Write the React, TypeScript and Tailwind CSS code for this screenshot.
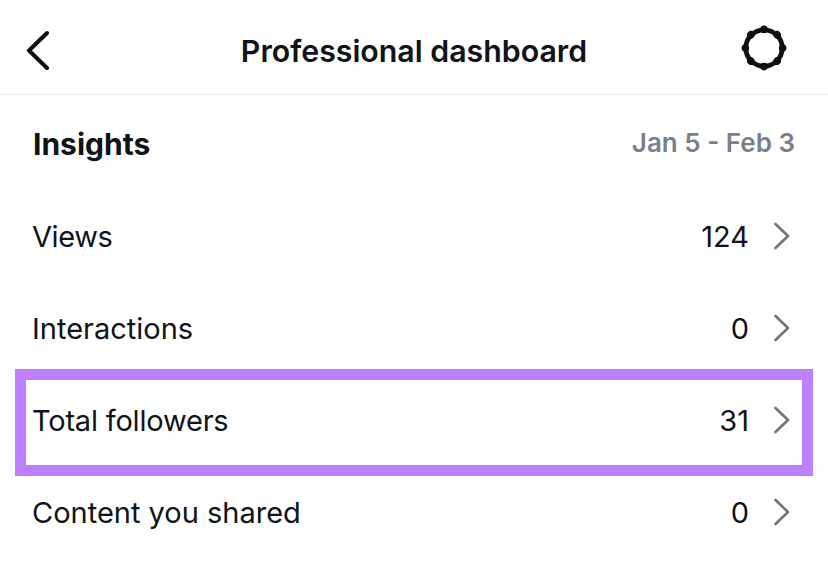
const rows = [
  { label: "Views", value: "124", labelClass: "tracking-[-0.4px]" },
  { label: "Interactions", value: "0", labelClass: "" },
  { label: "Total followers", value: "31", labelClass: "tracking-[-0.2px]", highlight: true },
  { label: "Content you shared", value: "0", labelClass: "" },
]

function Chevron() {
  return (
    <svg width="18" height="28" viewBox="0 0 18 28" fill="none" className="shrink-0">
      <path d="M2.5 2 L15 14 L2.5 26" stroke="#70747a" strokeWidth="2.6" strokeLinecap="round" strokeLinejoin="round" />
    </svg>
  )
}

function Gear() {
  // eight small bumps round a thick ring
  const bumps = [0, 45, 90, 135, 180, 225, 270, 315]
  return (
    <svg width="46" height="46" viewBox="0 0 46 46" fill="none">
      <circle cx="23" cy="23" r="18.2" stroke="#0c0f14" strokeWidth="4.8" />
      {bumps.map((a) => (
        <circle key={a} cx="23" cy="4.4" r="3.8" fill="#0c0f14" transform={`rotate(${a} 23 23)`} />
      ))}
    </svg>
  )
}

export default function App() {
  return (
    <div className="w-[828px] h-[580px] overflow-hidden bg-white text-[#101318] font-['Inter',sans-serif]">
      <header className="h-[95px] pt-[6px] border-b border-[#ececec] grid grid-cols-[1fr_auto_1fr] items-center pl-[26px] pr-[41px]">
        <svg width="24" height="40" viewBox="0 0 24 40" fill="none">
          <path d="M21 3 L3 20.5 L21 38" stroke="#0c0f14" strokeWidth="4" strokeLinecap="round" strokeLinejoin="round" />
        </svg>
        <h1 className="text-[30.3px] font-semibold leading-none pt-[2px] ml-[15px]">Professional dashboard</h1>
        <div className="justify-self-end mb-[4px]">
          <Gear />
        </div>
      </header>

      <div className="h-[95px] flex items-center justify-between px-[33px]">
        <h2 className="text-[30px] font-bold leading-none pt-[3px]">Insights</h2>
        <span className="text-[26px] font-semibold text-[#7a7f87] leading-none">Jan 5 - Feb 3</span>
      </div>

      {rows.map((r) => (
        <div key={r.label} className="relative h-[92px] flex items-center justify-between pl-[32px] pr-[37px]">
          <span className={`text-[29px] leading-none ${r.labelClass}`}>{r.label}</span>
          <div className="flex items-center gap-[24px]">
            <span className="text-[29px] leading-none">{r.value}</span>
            <Chevron />
          </div>
          {r.highlight && (
            <span className="absolute left-[15px] right-[15px] top-[-5px] bottom-[-10px] border-[11px] border-[#bd7fff]" />
          )}
        </div>
      ))}
    </div>
  )
}
